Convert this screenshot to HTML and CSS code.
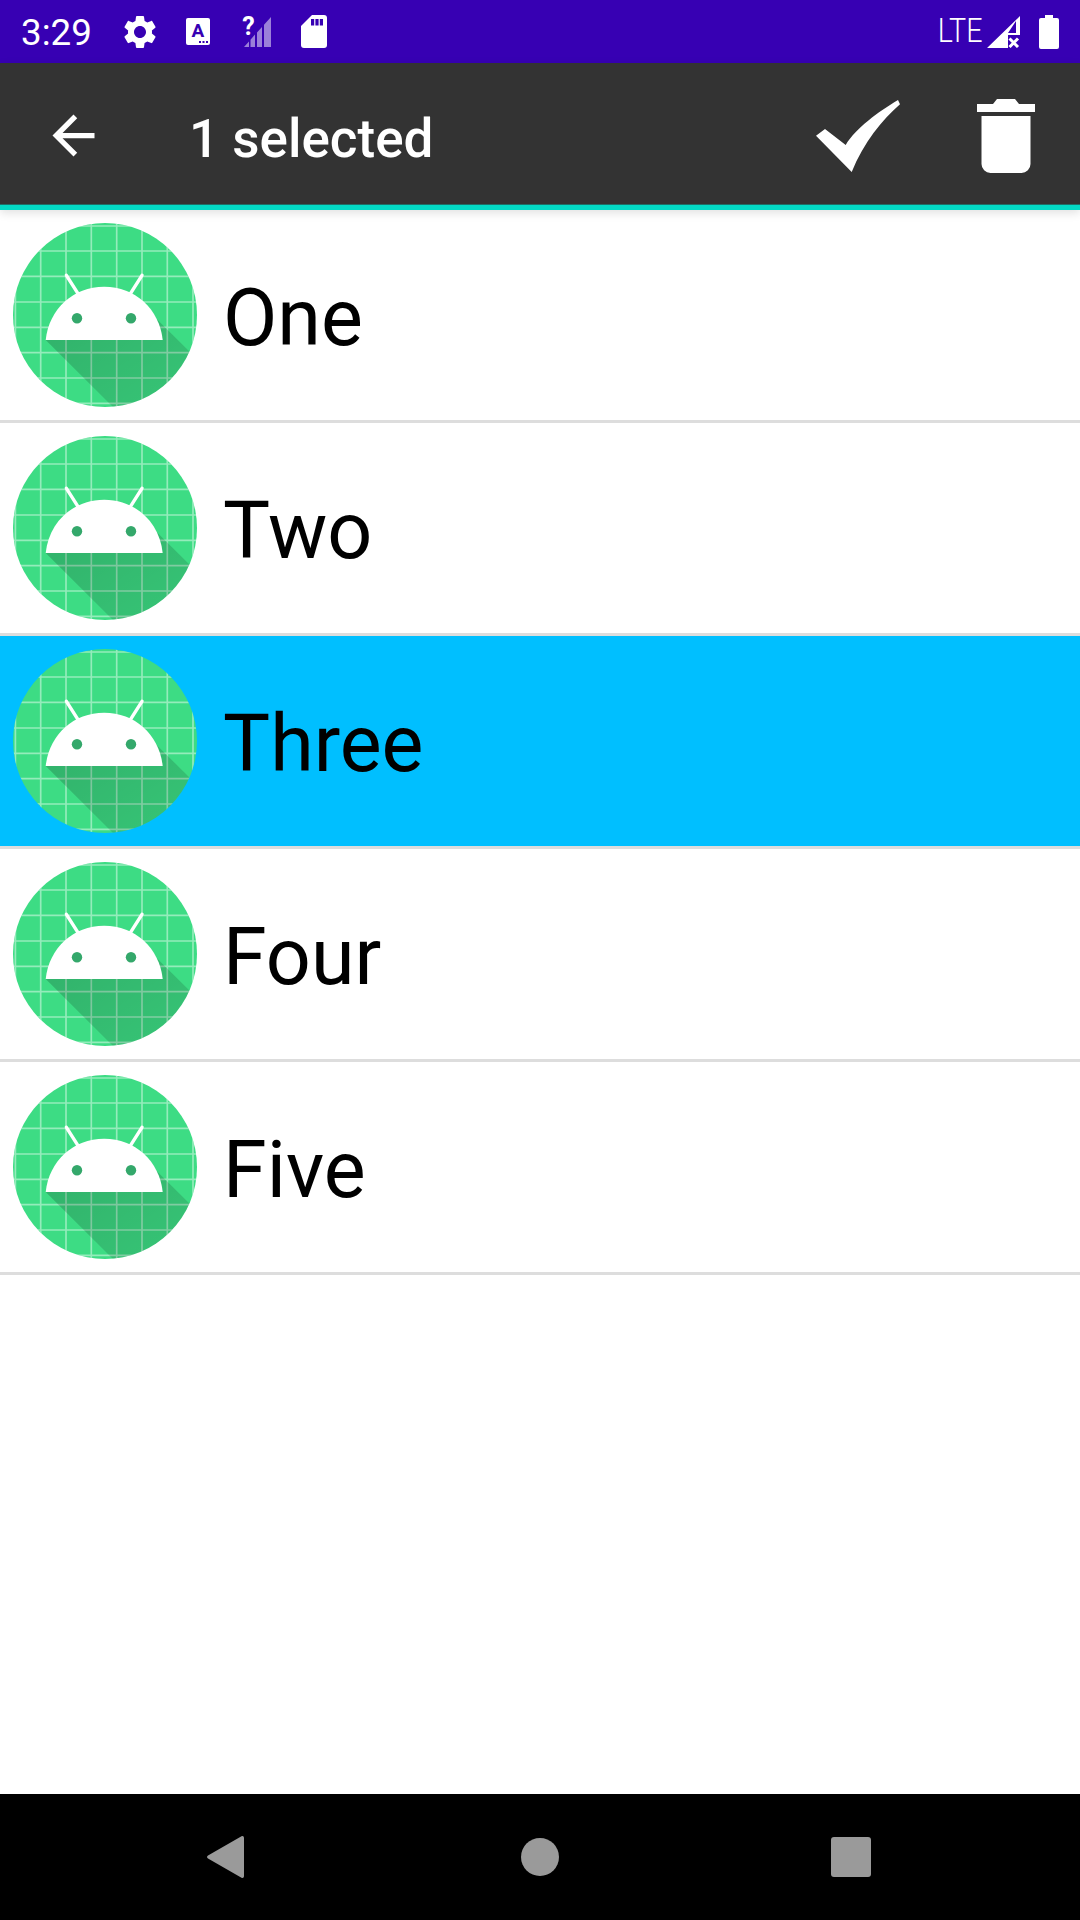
FILE: index.html
```html
<!DOCTYPE html>
<html lang="en">
<head>
<meta charset="utf-8">
<title>1 selected</title>
<link rel="stylesheet" href="styles.css">
</head>
<body>
<svg class="defs" width="0" height="0" aria-hidden="true">
  <defs>
    <clipPath id="disc"><circle cx="92" cy="92" r="92"/></clipPath>
    <linearGradient id="fall" x1="0" y1="0" x2="1" y2="1">
      <stop offset="0" stop-color="#000" stop-opacity=".2"/>
      <stop offset="1" stop-color="#000" stop-opacity=".1"/>
    </linearGradient>
    <symbol id="android" viewBox="0 0 184 184">
      <circle cx="92" cy="92" r="92" fill="#3ddc84"/>
      <g clip-path="url(#disc)">
        <path fill="none" stroke="#fff" stroke-opacity=".45" stroke-width="1.7" d="M2.400 0V184M27.700 0V184M53 0V184M78.300 0V184M103.700 0V184M129 0V184M154.300 0V184M180 0V184M0 3H184M0 28H184M0 53.300H184M0 79H184M0 104.300H184M0 129.700H184M0 155H184M0 180.400H184"/>
        <path fill="url(#fall)" d="M32.700 117 102 186H184V136L143.400 95.700 100 90Z"/>
      </g>
      <path fill="none" stroke="#fff" stroke-width="3.4" stroke-linecap="round" d="M53.400 52.300 65 70.700M129 52.300 117.400 70.700"/>
      <path fill="#fff" d="M32.700 117C36 86 60 63.700 91.200 63.700S146.400 86 149.700 117Z"/>
      <circle cx="64" cy="95.300" r="5.200" fill="#34a86b"/>
      <circle cx="118" cy="95.300" r="5.200" fill="#34a86b"/>
    </symbol>
  </defs>
</svg>
<div class="screen">
  <header class="status">
    <span class="time">3:29</span>
    <svg class="ic-gear" viewBox="0 0 24 24"><path fill="#fff" d="M19.140 12.940c.04-.3.06-.61.06-.94 0-.32-.02-.64-.07-.94l2.030-1.580c.18-.14.23-.41.12-.61l-1.920-3.320c-.12-.22-.37-.29-.59-.22l-2.390.96c-.5-.38-1.030-.7-1.620-.94l-.36-2.540c-.04-.24-.24-.41-.48-.41h-3.840c-.24 0-.43.17-.47.41l-.36 2.540c-.59.24-1.130.57-1.620.94l-2.390-.96c-.22-.08-.47 0-.59.22L2.740 8.870c-.12.21-.08.47.12.61l2.030 1.580c-.05.3-.09.63-.09.94s.02.64.07.94l-2.030 1.580c-.18.14-.23.41-.12.61l1.920 3.320c.12.22.37.29.59.22l2.390-.96c.5.38 1.030.7 1.620.94l.36 2.540c.05.24.24.41.48.41h3.840c.24 0 .44-.17.47-.41l.36-2.540c.59-.24 1.130-.56 1.620-.94l2.390.96c.22.08.47 0 .59-.22l1.920-3.320c.12-.22.07-.47-.12-.61l-2.010-1.580zM12 15.600c-1.980 0-3.600-1.620-3.600-3.600s1.620-3.600 3.600-3.600 3.600 1.620 3.600 3.600-1.620 3.600-3.600 3.600z"/></svg>
    <svg class="ic-a" viewBox="0 0 24 27"><rect width="24" height="27" rx="2" fill="#fff"/><text class="glyph" x="12" y="19" text-anchor="middle" font-size="19" fill="#3700b3">A</text><path fill="#3700b3" d="M13 23h2v2h-2zM16.500 23h2v2h-2zM20 23h2v2h-2z"/></svg>
    <svg class="ic-signal" viewBox="-4 -8 32 46"><path fill="#fff" fill-opacity=".5" d="M1 30 6 24.400V30ZM7.500 22.700 12 17.600V30H7.500ZM14 15.500 19 10V30H14ZM21 7.800 28 0V30H21Z"/><text class="glyph" x="5.500" y="18" text-anchor="middle" font-size="25" fill="#fff">?</text></svg>
    <svg class="ic-sd" viewBox="0 0 26 33"><path fill="#fff" d="M11 0H23A3 3 0 0 1 26 3V30A3 3 0 0 1 23 33H3A3 3 0 0 1 0 30V11Z"/><path fill="#3700b3" d="M10 4h3.200v6.500h-3.200zM14.400 4h3.200v6.500h-3.200zM18.800 4h3.200v6.500h-3.200z"/></svg>
    <span class="grow"></span>
    <svg class="ic-lte" viewBox="0 0 53 42" preserveAspectRatio="none"><text class="lte" x="1" y="31.500" font-size="33" fill="#fff">LTE</text></svg>
    <svg class="ic-nosig" viewBox="0 0 33 32"><path fill="#fff" fill-rule="evenodd" d="M0 32 33 0V19H21V32ZM21 17H29V5Z"/><path fill="none" stroke="#fff" stroke-width="3" d="M22.500 22.500 31 31M31 22.500 22.500 31"/></svg>
    <svg class="ic-batt" viewBox="0 0 20 34"><path fill="#fff" d="M6 0H14V3H18A2 2 0 0 1 20 5V32A2 2 0 0 1 18 34H2A2 2 0 0 1 0 32V5A2 2 0 0 1 2 3H6Z"/></svg>
  </header>

  <div class="actionbar">
    <svg class="ic-back" viewBox="0 0 24 24"><path fill="#fff" d="M20 11H7.830l5.590-5.590L12 4l-8 8 8 8 1.410-1.410L7.830 13H20v-2z"/></svg>
    <h1 class="title">1 selected</h1>
    <span class="grow"></span>
    <svg class="ic-check" viewBox="0 0 84 72"><path fill="#fff" d="M0 35.700 9 29 29.700 45C40 28 62 12 82 0L84 4.300C66 20 48 42 35.700 72Z"/></svg>
    <svg class="ic-trash" viewBox="0 0 58 74"><path fill="#fff" d="M0 5H16L20 0H38L42 5H58V13H0ZM4.500 17H53.500V65A9 9 0 0 1 44.500 74H13.500A9 9 0 0 1 4.500 65Z"/></svg>
  </div>

  <main class="list">
    <div class="row"><svg class="avatar"><use href="#android"/></svg><span class="label">One</span></div>
    <div class="row"><svg class="avatar"><use href="#android"/></svg><span class="label">Two</span></div>
    <div class="row row-selected"><svg class="avatar"><use href="#android"/></svg><span class="label">Three</span></div>
    <div class="row"><svg class="avatar"><use href="#android"/></svg><span class="label">Four</span></div>
    <div class="row"><svg class="avatar"><use href="#android"/></svg><span class="label">Five</span></div>
  </main>

  <nav class="navbar">
    <svg class="nav-back" viewBox="0 0 37 42"><path fill="#9a9a9a" d="M34.500 0.300C35.800-.5 37 .4 37 2V40C37 41.600 35.800 42.500 34.500 41.700L1 22.500C-.3 21.700-.3 20.300 1 19.500Z"/></svg>
    <span class="nav-home"></span>
    <span class="nav-recent"></span>
  </nav>
</div>
</body>
</html>
```

FILE: styles.css
```css
* { box-sizing: border-box; }
html, body { margin: 0; padding: 0; background: #fff; }
body { font-family: Roboto, "Liberation Sans", sans-serif; }
.defs { display: block; height: 0; }
.screen { width: 1080px; height: 1920px; display: flex; flex-direction: column; overflow: hidden; }
.grow { flex: 1; }

.status { height: 63px; background: #3700b3; display: flex; align-items: center; padding: 0 21px 0 21px; flex: none; }
.time { color: #fff; font-size: 36.750px; font-weight: 400; width: 78px; margin-top: 1px; }
.glyph { font-family: Roboto, sans-serif; font-weight: 700; }
.lte { font-family: Roboto, sans-serif; font-weight: 300; }
.ic-gear { width: 40px; height: 40px; margin: 0 0 0 21px; }
.ic-a { width: 24px; height: 27px; margin: 0 0 0 26px; }
.ic-signal { width: 32px; height: 46px; margin: 0 0 0 29px; }
.ic-sd { width: 26px; height: 33px; margin: 0 0 0 30px; }
.ic-lte { width: 46px; height: 42px; }
.ic-nosig { width: 33px; height: 32px; margin: 0 0 0 4px; }
.ic-batt { width: 20px; height: 34px; margin: 0 0 0 19px; }

.actionbar { height: 147px; background: #333; border-bottom: 5px solid #03dac5; display: flex; align-items: center; padding: 5px 45px 0 43px; flex: none; position: relative; z-index: 1; box-shadow: inset 0 -1px 0 #1f6f68, 0 3px 9px rgba(0, 0, 0, .12); }
.ic-back { width: 63px; height: 63px; margin-left: -1px; margin-right: 1px; margin-top: -2px; }
.title { margin: 5px 0 0 83px; color: #fff; font-size: 53px; font-weight: 500; line-height: 1; }
.ic-check { width: 84px; height: 72px; margin: -2px 77px 0 0; }
.ic-trash { width: 58px; height: 74px; margin-top: -2px; }

.list { flex: 1; display: flex; flex-direction: column; }
.row { height: 213px; display: flex; align-items: flex-start; padding: 13px 0 0 13px; border-bottom: 3px solid #ddd; background: #fff; flex: none; }
.row-selected { background: #00bfff; }
.avatar { width: 184px; height: 184px; flex: none; }
.label { margin: 49px 0 0 26px; color: #000; font-size: 79px; line-height: 92px; }

.navbar { height: 126px; background: #000; display: flex; align-items: center; flex: none; padding: 0 209px 0 207px; justify-content: space-between; }
.nav-back { width: 37px; height: 42px; }
.nav-home { width: 38px; height: 38px; margin-left: 5px; border-radius: 50%; background: #9a9a9a; }
.nav-recent { width: 40px; height: 40px; border-radius: 3px; background: #9a9a9a; }
```
